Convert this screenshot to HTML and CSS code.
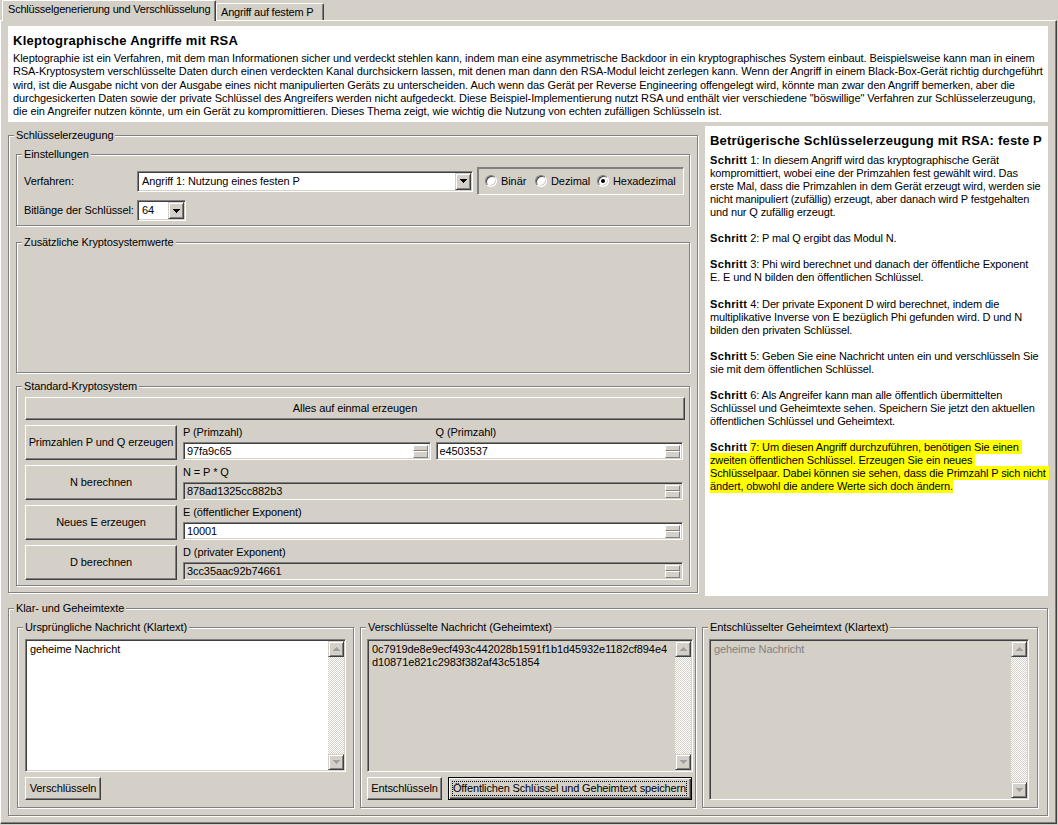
FILE: index.html
```html
<!DOCTYPE html>
<html lang="de">
<head>
<meta charset="utf-8">
<title>Kleptographische Angriffe mit RSA</title>
<link rel="stylesheet" href="styles.css">
</head>
<body>
<div class="tabs">
  <div class="tab tab-active">Schlüsselgenerierung und Verschlüsselung</div>
  <div class="tab tab-normal">Angriff auf festem P</div>
</div>
<div class="panel">
  <div class="intro">
    <h1>Kleptographische Angriffe mit RSA</h1>
    <p>Kleptographie ist ein Verfahren, mit dem man Informationen sicher und verdeckt stehlen kann, indem man eine asymmetrische Backdoor in ein kryptographisches System einbaut. Beispielsweise kann man in einem<br>RSA-Kryptosystem verschlüsselte Daten durch einen verdeckten Kanal durchsickern lassen, mit denen man dann den RSA-Modul leicht zerlegen kann. Wenn der Angriff in einem Black-Box-Gerät richtig durchgeführt<br>wird, ist die Ausgabe nicht von der Ausgabe eines nicht manipulierten Geräts zu unterscheiden. Auch wenn das Gerät per Reverse Engineering offengelegt wird, könnte man zwar den Angriff bemerken, aber die<br>durchgesickerten Daten sowie der private Schlüssel des Angreifers werden nicht aufgedeckt. Diese Beispiel-Implementierung nutzt RSA und enthält vier verschiedene "böswillige" Verfahren zur Schlüsselerzeugung,<br>die ein Angreifer nutzen könnte, um ein Gerät zu kompromittieren. Dieses Thema zeigt, wie wichtig die Nutzung von echten zufälligen Schlüsseln ist.</p>
  </div>

  <div class="main">
    <div class="group keygen">
      <div class="legend">Schlüsselerzeugung</div>

      <div class="group settings">
        <div class="legend">Einstellungen</div>
        <div class="set-row set-row1">
          <span class="set-label">Verfahren:</span>
          <div class="combo combo-wide">
            <span class="combo-text">Angriff 1: Nutzung eines festen P</span>
            <span class="combo-btn"><svg width="7" height="4" viewBox="0 0 7 4"><path d="M0 0h7v1H0zM1 1h5v1H1zM2 2h3v1H2zM3 3h1v1H3z" fill="#000"/></svg></span>
          </div>
          <div class="radiobox">
            <span class="opt opt1"><span class="radio"></span>Binär</span>
            <span class="opt opt2"><span class="radio"></span>Dezimal</span>
            <span class="opt"><span class="radio radio-on"></span>Hexadezimal</span>
          </div>
        </div>
        <div class="set-row set-row2">
          <span class="set-label">Bitlänge der Schlüssel:</span>
          <div class="combo combo-small">
            <span class="combo-text">64</span>
            <span class="combo-btn"><svg width="7" height="4" viewBox="0 0 7 4"><path d="M0 0h7v1H0zM1 1h5v1H1zM2 2h3v1H2zM3 3h1v1H3z" fill="#000"/></svg></span>
          </div>
        </div>
      </div>

      <div class="group extra">
        <div class="legend">Zusätzliche Kryptosystemwerte</div>
      </div>

      <div class="group std">
        <div class="legend">Standard-Kryptosystem</div>
        <div class="btn btn-all">Alles auf einmal erzeugen</div>

        <div class="std-row">
          <div class="btn btn-step">Primzahlen P und Q erzeugen</div>
          <div class="std-fields">
            <div class="fieldcol">
              <div class="flabel">P (Primzahl)</div>
              <div class="field"><span class="ftext">97fa9c65</span><span class="spin"><span></span><span></span></span></div>
            </div>
            <div class="fieldcol">
              <div class="flabel">Q (Primzahl)</div>
              <div class="field"><span class="ftext">e4503537</span><span class="spin"><span></span><span></span></span></div>
            </div>
          </div>
        </div>

        <div class="std-row">
          <div class="btn btn-step">N berechnen</div>
          <div class="std-fields">
            <div class="fieldcol">
              <div class="flabel">N = P * Q</div>
              <div class="field field-ro"><span class="ftext">878ad1325cc882b3</span><span class="spin"><span></span><span></span></span></div>
            </div>
          </div>
        </div>

        <div class="std-row">
          <div class="btn btn-step">Neues E erzeugen</div>
          <div class="std-fields">
            <div class="fieldcol">
              <div class="flabel">E (öffentlicher Exponent)</div>
              <div class="field"><span class="ftext">10001</span><span class="spin"><span></span><span></span></span></div>
            </div>
          </div>
        </div>

        <div class="std-row">
          <div class="btn btn-step">D berechnen</div>
          <div class="std-fields">
            <div class="fieldcol">
              <div class="flabel">D (privater Exponent)</div>
              <div class="field field-ro"><span class="ftext">3cc35aac92b74661</span><span class="spin"><span></span><span></span></span></div>
            </div>
          </div>
        </div>
      </div>
    </div>

    <div class="steps">
      <h2>Betrügerische Schlüsselerzeugung mit RSA: feste P</h2>
      <div class="steps-body">
        <p><b>Schritt</b> 1: In diesem Angriff wird das kryptographische Gerät<br>kompromittiert, wobei eine der Primzahlen fest gewählt wird. Das<br>erste Mal, dass die Primzahlen in dem Gerät erzeugt wird, werden sie<br>nicht manipuliert (zufällig) erzeugt, aber danach wird P festgehalten<br>und nur Q zufällig erzeugt.</p>
        <p><b>Schritt</b> 2: P mal Q ergibt das Modul N.</p>
        <p><b>Schritt</b> 3: Phi wird berechnet und danach der öffentliche Exponent<br>E. E und N bilden den öffentlichen Schlüssel.</p>
        <p><b>Schritt</b> 4: Der private Exponent D wird berechnet, indem die<br>multiplikative Inverse von E bezüglich Phi gefunden wird. D und N<br>bilden den privaten Schlüssel.</p>
        <p><b>Schritt</b> 5: Geben Sie eine Nachricht unten ein und verschlüsseln Sie<br>sie mit dem öffentlichen Schlüssel.</p>
        <p><b>Schritt</b> 6: Als Angreifer kann man alle öffentlich übermittelten<br>Schlüssel und Geheimtexte sehen. Speichern Sie jetzt den aktuellen<br>öffentlichen Schlüssel und Geheimtext.</p>
        <p><b>Schritt</b> <mark>7: Um diesen Angriff durchzuführen, benötigen Sie einen&nbsp;<br>zweiten öffentlichen Schlüssel. Erzeugen Sie ein neues&nbsp;<br>Schlüsselpaar. Dabei können sie sehen, dass die Primzahl P sich nicht&nbsp;<br>ändert, obwohl die andere Werte sich doch ändern.</mark></p>
      </div>
    </div>
  </div>

  <div class="group texts">
    <div class="legend">Klar- und Geheimtexte</div>
    <div class="subs">
      <div class="group sub sub1">
        <div class="legend">Ursprüngliche Nachricht (Klartext)</div>
        <div class="memo memo-short memo-white">
          <div class="memo-text">geheime Nachricht</div>
          <div class="vscroll">
            <span class="sb-btn"><svg width="7" height="4" viewBox="0 0 7 4"><path d="M3 0h1v1H3zM2 1h3v1H2zM1 2h5v1H1zM0 3h7v1H0z" fill="#a0a0a0"/></svg></span>
            <span class="sb-track"></span>
            <span class="sb-btn"><svg width="7" height="4" viewBox="0 0 7 4"><path d="M0 0h7v1H0zM1 1h5v1H1zM2 2h3v1H2zM3 3h1v1H3z" fill="#a0a0a0"/></svg></span>
          </div>
        </div>
        <div class="btnrow">
          <div class="btn btn-enc">Verschlüsseln</div>
        </div>
      </div>

      <div class="group sub sub2">
        <div class="legend">Verschlüsselte Nachricht (Geheimtext)</div>
        <div class="memo memo-short">
          <div class="memo-text">0c7919de8e9ecf493c442028b1591f1b1d45932e1182cf894e4<br>d10871e821c2983f382af43c51854</div>
          <div class="vscroll">
            <span class="sb-btn"><svg width="7" height="4" viewBox="0 0 7 4"><path d="M3 0h1v1H3zM2 1h3v1H2zM1 2h5v1H1zM0 3h7v1H0z" fill="#a0a0a0"/></svg></span>
            <span class="sb-track"></span>
            <span class="sb-btn"><svg width="7" height="4" viewBox="0 0 7 4"><path d="M0 0h7v1H0zM1 1h5v1H1zM2 2h3v1H2zM3 3h1v1H3z" fill="#a0a0a0"/></svg></span>
          </div>
        </div>
        <div class="btnrow">
          <div class="btn btn-dec">Entschlüsseln</div>
          <div class="btn btn-save btn-default"><span class="focus">Öffentlichen Schlüssel und Geheimtext speichern</span></div>
        </div>
      </div>

      <div class="group sub sub3">
        <div class="legend">Entschlüsselter Geheimtext (Klartext)</div>
        <div class="memo memo-tall memo-disabled">
          <div class="memo-text">geheime Nachricht</div>
          <div class="vscroll">
            <span class="sb-btn"><svg width="7" height="4" viewBox="0 0 7 4"><path d="M3 0h1v1H3zM2 1h3v1H2zM1 2h5v1H1zM0 3h7v1H0z" fill="#a0a0a0"/></svg></span>
            <span class="sb-track"></span>
            <span class="sb-btn"><svg width="7" height="4" viewBox="0 0 7 4"><path d="M0 0h7v1H0zM1 1h5v1H1zM2 2h3v1H2zM3 3h1v1H3z" fill="#a0a0a0"/></svg></span>
          </div>
        </div>
      </div>
    </div>
  </div>
</div>
</body>
</html>
```
FILE: styles.css
```css
* { box-sizing: border-box; }
html, body { margin: 0; padding: 0; }
body {
  width: 1058px; height: 825px; overflow: hidden;
  background: #d4d0c8; color: #000;
  font-family: "Liberation Sans", Arial, sans-serif;
  font-size: 11px; line-height: 13px; letter-spacing: -0.09px;
}

/* tabs */
.tabs { position: relative; z-index: 1; display: flex; align-items: flex-end; height: 20px; padding-left: 2px; }
.tab {
  background: #d4d0c8; white-space: nowrap; overflow: hidden; letter-spacing: -0.2px;
  border-top: 1px solid #fff; border-left: 1px solid #fff; border-right: 1px solid #404040;
  box-shadow: inset -1px 0 #808080; border-radius: 2px 2px 0 0;
}
.tab-active { width: 214px; height: 21px; margin-bottom: -1px; padding: 2px 0 0 5px; }
.tab-normal { width: 108px; height: 17px; padding: 2px 0 0 4px; }

.panel {
  width: 1057px; height: 804px;
  border: 1px solid; border-color: #fff #404040 #404040 #fff;
  box-shadow: inset -1px -1px #808080;
  padding: 5px 8px 0 7px;
}

/* intro */
.intro { background: #fff; height: 96px; padding: 7px 5px 0; }
.intro h1 { margin: 0; font-size: 13px; line-height: 16px; font-weight: bold; letter-spacing: 0.25px; }
.intro p { margin: 3px 0 0; line-height: 13.25px; white-space: nowrap; }

/* main */
.main { display: flex; align-items: flex-start; gap: 7px; height: 470px; margin-top: 4px; }

.group { border: 1px solid #808080; box-shadow: inset 1px 1px #fff, 1px 1px #fff; }
.legend {
  width: max-content; height: 13px; margin: -7px 0 0 5px; padding: 0 2px;
  background: #d4d0c8; white-space: nowrap;
}

.keygen { width: 690px; height: 458px; margin-top: 9px; }
.keygen > .group { margin-left: 7px; margin-right: 7px; }
.settings { height: 72px; margin-top: 12px; }
.extra { height: 131px; margin-top: 16px; }
.std { height: 200px; margin-top: 13px; }

.set-row { display: flex; align-items: center; padding-left: 7px; }
.set-row1 { height: 28px; margin-top: 6px; }
.set-row2 { height: 21px; margin-top: 5px; }
.set-label { width: 113px; flex: none; white-space: nowrap; }

.combo {
  display: flex; height: 21px; padding: 1px; background: #fff;
  border: 1px solid; border-color: #808080 #fff #fff #808080;
  box-shadow: inset 1px 1px #404040, inset -1px -1px #d4d0c8;
}
.combo-wide { width: 336px; }
.combo-small { width: 49px; }
.combo-text { flex: 1; padding: 2px 0 0 3px; white-space: nowrap; overflow: hidden; }
.combo-btn {
  width: 16px; height: 17px; display: flex; align-items: center; justify-content: center;
  background: #d4d0c8; border: 1px solid; border-color: #d4d0c8 #404040 #404040 #d4d0c8;
  box-shadow: inset 1px 1px #fff, inset -1px -1px #808080;
}

.radiobox {
  width: 207px; height: 28px; margin-left: 4px; display: flex; align-items: center; padding-left: 7px;
  border: 1px solid; border-color: #808080 #fff #fff #808080; box-shadow: inset 1px 1px #808080;
}
.opt { display: flex; align-items: center; white-space: nowrap; }
.opt1 { width: 50px; }
.opt2 { width: 62px; }
.radio {
  position: relative; width: 12px; height: 12px; margin-right: 4px; border-radius: 50%; background: #fff;
  border: 1px solid; border-color: #808080 #fff #fff #808080;
  box-shadow: inset 1px 1px #404040, inset -1px -1px #d4d0c8;
}
.radio-on::after {
  content: ""; position: absolute; left: 3px; top: 3px; width: 4px; height: 4px; border-radius: 50%; background: #000;
}

/* buttons */
.btn {
  display: flex; align-items: center; justify-content: center; text-align: center; white-space: nowrap;
  background: #d4d0c8; border: 1px solid; border-color: #fff #404040 #404040 #fff;
  box-shadow: inset -1px -1px #808080;
}
.btn-all { height: 23px; margin: 4px 4px 0 8px; }
.btn-step { width: 152px; flex: none; }
.btn-default {
  border-color: #000;
  box-shadow: inset 1px 1px #fff, inset -1px -1px #404040, inset -2px -2px #808080;
  padding: 3px 4px 3px 3px;
}
.focus {
  flex: 1; align-self: stretch; display: flex; align-items: center; justify-content: center;
  border: 1px dotted #000; letter-spacing: -0.15px;
}

/* std crypto rows */
.std-row { display: flex; gap: 6px; height: 35px; margin: 5px 4px 0 8px; }
.std-fields { flex: 1; display: flex; gap: 5px; margin-right: 2px; }
.fieldcol { flex: 1; display: flex; flex-direction: column; justify-content: space-between; }
.flabel { padding-top: 1px; white-space: nowrap; }
.field {
  height: 18px; display: flex; align-items: center; padding: 1px; background: #fff;
  border: 1px solid; border-color: #808080 #fff #fff #808080;
  box-shadow: inset 1px 1px #404040, inset -1px -1px #d4d0c8;
}
.field-ro { background: #d4d0c8; }
.ftext { flex: 1; padding-left: 2px; white-space: nowrap; }
.spin { width: 15px; height: 13px; display: flex; flex-direction: column; margin-right: 1px; }
.spin span {
  flex: 1; background: #d4d0c8;
  border: 1px solid; border-color: #fff #808080 #808080 #fff;
}

/* steps */
.steps { width: 343px; height: 470px; background: #fff; padding: 7px 5px 0; }
.steps h2 { margin: 0; font-size: 13px; line-height: 16px; font-weight: bold; white-space: nowrap; letter-spacing: 0.2px; }
.steps-body { margin-top: 5px; line-height: 13.05px; white-space: nowrap; letter-spacing: -0.13px; }
.steps-body p { margin: 0 0 13.05px; }
.steps-body b { letter-spacing: 0.35px; }
mark { background: #ffff00; color: #000; padding: 1px 0; }

/* texts */
.texts { height: 208px; margin-top: 12px; }
.subs { display: flex; gap: 6px; margin: 12px 9px 0 8px; }
.sub { height: 181px; display: flex; flex-direction: column; }
.sub1 { width: 337px; }
.sub2, .sub3 { width: 336px; }
.sub1 .memo, .sub1 .btnrow { margin-left: 7px; margin-right: 7px; }
.sub2 .memo, .sub2 .btnrow { margin-left: 6px; margin-right: 2px; }
.sub3 .memo { margin-left: 6px; margin-right: 8px; }

.memo {
  display: flex; margin-top: 5px; padding: 1px; background: #d4d0c8;
  border: 1px solid; border-color: #808080 #fff #fff #808080;
  box-shadow: inset 1px 1px #404040, inset -1px -1px #d4d0c8;
}
.memo-short { height: 133px; }
.memo-tall { height: 161px; }
.memo-white { background: #fff; }
.memo-text { flex: 1; padding: 2px 3px; white-space: nowrap; overflow: hidden; }
.memo-disabled .memo-text { color: #808080; }
.vscroll { width: 16px; display: flex; flex-direction: column; }
.sb-btn {
  height: 16px; display: flex; align-items: center; justify-content: center; background: #d4d0c8;
  border: 1px solid; border-color: #d4d0c8 #404040 #404040 #d4d0c8;
  box-shadow: inset 1px 1px #fff, inset -1px -1px #808080;
}
.sb-track { flex: 1; background: repeating-conic-gradient(#fff 0 25%, #d4d0c8 0 50%) 0 0 / 2px 2px; }

.btnrow { display: flex; gap: 6px; margin-top: 5px; height: 23px; }
.btn-enc { width: 76px; }
.btn-dec { width: 75px; }
.btn-save { width: 244px; }
```
